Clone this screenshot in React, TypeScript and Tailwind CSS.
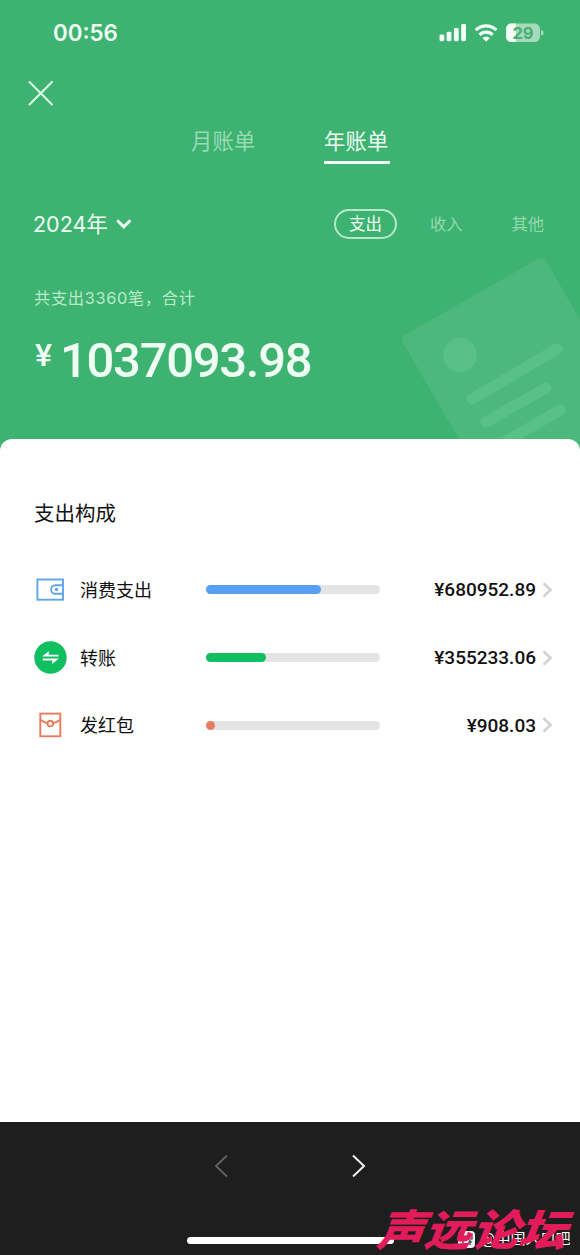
import React from 'react';

const cjk = "font-['Inter','Noto_Sans_CJK_SC',sans-serif]";

function StatusIcons() {
  return (
    <svg width="106" height="22" viewBox="438 22 106 22" fill="#f2fff6">
      <rect x="439.5" y="34.5" width="4.8" height="6.7" rx="1.4" />
      <rect x="446.6" y="31.8" width="4.8" height="9.4" rx="1.4" />
      <rect x="453.9" y="28" width="4.8" height="13.2" rx="1.4" />
      <rect x="461.2" y="24" width="4.8" height="17.2" rx="1.4" />
      <g fill="none" stroke="#f2fff6" strokeWidth="3.3">
        <path d="M475.8 30.2a14.6 14.6 0 0 1 20.6 0" />
        <path d="M479.6 34.8a9.2 9.2 0 0 1 13 0" />
      </g>
      <path d="M486.1 41.8l-3.7-3.7a5.2 5.2 0 0 1 7.4 0z" />
      <rect x="506" y="23.5" width="34" height="18.5" rx="5.5" fill="#a5dbba" />
      <path d="M516 23.5h-4.5a5.5 5.5 0 0 0-5.5 5.5v7.5a5.5 5.5 0 0 0 5.5 5.5h4.5z" />
      <path d="M541 30.2a2.6 2.6 0 0 1 0 5.2z" fill="#a5dbba" />
      <text x="523" y="38.9" textAnchor="middle" fontFamily="Inter" fontWeight="700" fontSize="16.5" fill="#4aad75">29</text>
    </svg>
  );
}

function WalletIcon() {
  return (
    <svg width="32" height="32" viewBox="34 574 32 32" fill="none" stroke="#5fa5ea" strokeWidth="1.9">
      <rect x="37.4" y="579.5" width="25.6" height="20.2" />
      <path d="M63 585.2h-7.6a4.3 4.3 0 0 0 0 8.6h7.6" />
      <circle cx="56.5" cy="589.5" r="1.7" fill="#5fa5ea" stroke="none" />
    </svg>
  );
}

function TransferIcon() {
  return (
    <svg className="shrink-0" width="33" height="33" viewBox="33.5 640.5 33 33">
      <circle cx="50" cy="657" r="16.2" fill="#0fbf60" />
      <path d="M41.5 656L48.3 650.7V654.2H58V656ZM58.5 658.1L51.7 663.4V659.9H42.3V658.1Z" fill="#fff" />
    </svg>
  );
}

function PacketIcon() {
  return (
    <svg width="32" height="32" viewBox="34 709 32 32" fill="none" stroke="#ea7c5e" strokeWidth="1.9">
      <rect x="40.3" y="713.6" width="20" height="22.7" />
      <path d="M40.5 719.8q3.500 2.800 6.900 3.300M60.100 719.800q-3.500 2.800-6.900 3.300" />
      <circle cx="50.300" cy="723.600" r="2.800" />
    </svg>
  );
}

const rows = [
  { label: '消费支出', amount: '¥680952.89', icon: <WalletIcon />, bar: 'w-[115px] bg-[#579ff0]' },
  { label: '转账', amount: '¥355233.06', icon: <TransferIcon />, bar: 'w-[60px] bg-[#0fbf60]' },
  { label: '发红包', amount: '¥908.03', icon: <PacketIcon />, bar: 'w-[9px] bg-[#ea7c5e]' },
];

export default function App() {
  return (
    <div className={`relative flex h-[1255px] w-[580px] flex-col overflow-hidden bg-[#3eb371] leading-none ${cjk}`}>
      <header className="relative h-[439px] text-[#effff4]">
        <svg className="absolute left-[400px] top-[250px]" width="180" height="201" viewBox="400 250 180 201">
          <path d="M405 335L538 259Q543 256.500 546 261L640 423V560H530L403 343Q400.500 338 405 335z" fill="#4db87c" />
          <circle cx="460" cy="355" r="17" fill="#59c188" />
          <g stroke="#59c188" strokeWidth="11" strokeLinecap="round">
            <path d="M472 399L557 349M486 422L546 388M500 445L560 410" />
          </g>
        </svg>
        <div className="relative flex h-[66px] items-center justify-between pl-[53px] pr-9">
          <span className="pt-px text-[22.300px] font-semibold">00:56</span>
          <StatusIcons />
        </div>
        <svg className="relative ml-[28px] mt-[14px]" width="26" height="26" viewBox="0 0 26 26">
          <path d="M1.500 2l22.500 22.500M24 2L1.500 24.500" stroke="#e0ffe9" strokeWidth="2" strokeLinecap="round" />
        </svg>
        <nav className="relative mt-[18px] flex h-10 text-[21.300px] tracking-[0.200px]">
          <div className="ml-[191px] w-[133px] pt-[7px] text-[#99dbb4]">月账单</div>
          <div className="w-[66px] border-b-[3px] border-[#f2fff6] pt-[7px]">年账单</div>
        </nav>
        <div className="relative mt-[43px] flex h-[34px] items-center">
          <span className="ml-[33px] w-[82px] pt-px text-[21.500px]">2024年</span>
          <svg width="18" height="12" viewBox="0 0 18 12"><path d="M2.200 2.300l6.600 6.600 6.600-6.600" fill="none" stroke="#effff4" strokeWidth="2.900" /></svg>
          <div className="ml-[201px] flex h-[30px] w-[63px] items-center justify-center rounded-full border-2 border-[#b5e8c8] pt-px text-[16.500px]">支出</div>
          <span className="ml-[33px] pt-px text-[16.300px] text-[#94d9af]">收入</span>
          <span className="ml-[49px] pt-px text-[16.300px] text-[#94d9af]">其他</span>
        </div>
        <div className="relative ml-[34px] mt-[49px] whitespace-nowrap text-[16.300px] tracking-[0.650px] text-[#b9ebca]">共支出3360笔，合计</div>
        <div className="relative ml-[35px] mt-[30px] flex h-[49px] font-['Roboto',sans-serif] font-medium">
          <span className="w-[25px] pt-[3px] text-[32px]">¥</span>
          <span className="text-[49px] tracking-[-1.300px]">1037093.98</span>
        </div>
      </header>
      <main className="relative h-[683px] rounded-t-[12px] bg-white px-[34px] text-[#111]">
        <h1 className="pt-[64px] text-[20.500px] leading-[21px]">支出构成</h1>
        <div className="mt-[32px] flex flex-col">
          {rows.map((r) => (
            <div key={r.label} className="-mr-[8px] flex h-[67.700px] items-center">
              <div className="flex w-8 justify-center">{r.icon}</div>
              <span className="ml-[14px] w-[126px] pt-[2px] text-[18px]">{r.label}</span>
              <div className="h-[9px] w-[174px] rounded-full bg-[#e4e4e4]">
                <div className={`h-full rounded-full ${r.bar}`} />
              </div>
              <span className="ml-auto font-['Roboto',sans-serif] text-[19px] font-medium">{r.amount}</span>
              <svg className="ml-[4px]" width="14" height="18" viewBox="0 0 14 18"><path d="M3.500 2.200l7 6.700-7 6.700" fill="none" stroke="#d2d2d2" strokeWidth="2.600" /></svg>
            </div>
          ))}
        </div>
      </main>
      <footer className="relative h-[133px] bg-[#1e1e1e]">
        <div className="flex pl-[213px] pt-[31px]">
          <svg width="16" height="26" viewBox="0 0 16 26"><path d="M14 2.500L3 13 14 23.500" fill="none" stroke="#626262" strokeWidth="1.800" /></svg>
          <svg className="ml-[122px]" width="16" height="26" viewBox="0 0 16 26"><path d="M2 2.500L13 13 2 23.500" fill="none" stroke="#f0f0f0" strokeWidth="2" /></svg>
        </div>
        <div className="ml-[187px] mt-[58px] h-[7px] w-[207px] rounded-full bg-white" />
        <div className="absolute left-[458px] top-[108px] flex items-center whitespace-nowrap text-[15px] leading-[18px] text-white">
          <svg width="17" height="17" viewBox="0 0 17 17"><rect width="17" height="17" rx="4" fill="#eee" /><path d="M3 5h5M3 9h5M5 3v10M10 4h4v4h-4zM10 11h4M12 9v5" stroke="#333" strokeWidth="1.200" fill="none" /></svg>
          <span className="ml-[6px]">@中国人口吧</span>
        </div>
        <div className="absolute left-[383px] top-[82px] origin-left whitespace-nowrap font-['Noto_Sans_CJK_SC',sans-serif] text-[43px] font-black leading-[46px] text-[#e21b5a] [transform:skewX(-22deg)_scaleX(1.1)]">声远论坛</div>
      </footer>
    </div>
  );
}
